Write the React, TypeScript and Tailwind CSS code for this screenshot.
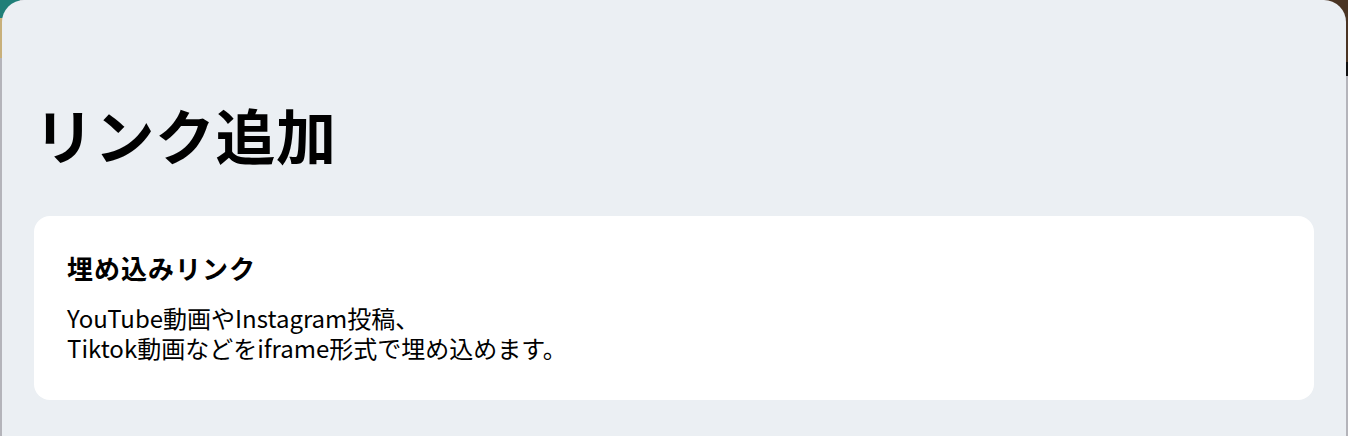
const font = "font-['Noto_Sans_CJK_JP','Noto_Sans',sans-serif]";

function EmbedCard() {
  return (
    <div className="rounded-2xl bg-white px-[33px] pt-[36px] pb-[37px]">
      <h2 className="text-[26px] font-bold leading-[32px] tracking-[1px] text-black">埋め込みリンク</h2>
      <p className="mt-[19px] text-[24px] leading-[30px] text-black">
        YouTube動画やInstagram投稿、
        <br />
        Tiktok動画などをiframe形式で埋め込めます。
      </p>
    </div>
  );
}

export default function App() {
  return (
    <div className={`${font} relative h-[436px] overflow-hidden bg-[#b4b4ba]`}>
      {/* page peeking out behind the sheet */}
      <div className="absolute left-0 top-0 h-[18px] w-[20px] bg-[#1f7f78]" />
      <div className="absolute left-0 top-[18px] h-[40px] w-[20px] bg-[#c8b07a]" />
      <div className="absolute right-0 top-0 h-[62px] w-[30px] bg-[#4a3423]" />
      <div className="absolute right-0 top-[62px] h-[14px] w-[30px] bg-[#111111]" />
      <div className="relative mx-[2px] h-full rounded-t-[22px] bg-[#ebeff3] px-[32px]">
        <h1 className="pt-[94px] text-[60px] font-bold leading-[80px] tracking-[0.5px] text-black">
          リンク追加
        </h1>
        <div className="mt-[42px]">
          <EmbedCard />
        </div>
      </div>
    </div>
  );
}
